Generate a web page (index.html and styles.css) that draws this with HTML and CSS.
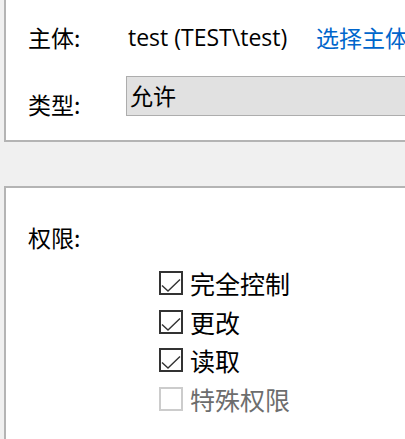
FILE: index.html
```html
<!DOCTYPE html>
<html lang="zh-CN">
<head>
<meta charset="utf-8">
<link rel="stylesheet" href="styles.css">
</head>
<body>
<div class="panel top">
  <div class="row r1">
    <span class="label">主体:</span>
    <span class="value">test (TEST\test)</span>
    <a class="link">选择主体</a>
  </div>
  <div class="row r2">
    <span class="label">类型:</span>
    <div class="combo">允许</div>
  </div>
</div>
<div class="panel bottom">
  <div class="label perm">权限:</div>
  <ul class="checks">
    <li class="check"><span class="box"><svg width="24" height="24" viewBox="0 0 24 24"><path d="M3 14.5 L9 20 L21 8.5" fill="none" stroke="#333" stroke-width="1.4"/></svg></span><span class="txt">完全控制</span></li>
    <li class="check"><span class="box"><svg width="24" height="24" viewBox="0 0 24 24"><path d="M3 14.5 L9 20 L21 8.5" fill="none" stroke="#333" stroke-width="1.4"/></svg></span><span class="txt">更改</span></li>
    <li class="check"><span class="box"><svg width="24" height="24" viewBox="0 0 24 24"><path d="M3 14.5 L9 20 L21 8.5" fill="none" stroke="#333" stroke-width="1.4"/></svg></span><span class="txt">读取</span></li>
    <li class="check disabled"><span class="box"></span><span class="txt">特殊权限</span></li>
  </ul>
</div>
</body>
</html>
```
FILE: styles.css
```css
html, body {
  margin: 0;
  padding: 0;
  background: #f0f0f0;
  overflow: hidden;
  width: 405px;
  height: 439px;
}
body {
  font-family: "Noto Sans", "Noto Sans CJK SC", sans-serif;
  color: #000;
}
.panel {
  margin-left: 4px;
  background: #fff;
  border-left: 2px solid #b4b4b4;
  box-sizing: border-box;
  overflow: hidden;
}
.panel.top {
  height: 142px;
  border-bottom: 2px solid #b4b4b4;
  padding: 22px 0 0 22px;
}
.panel.bottom {
  margin-top: 44px;
  height: 253px;
  border-top: 2px solid #b4b4b4;
  padding: 34px 0 0 22px;
}
.row {
  display: flex;
  align-items: center;
  white-space: nowrap;
}
.row > * { flex: none; }
.label {
  font-family: "Noto Sans CJK SC", sans-serif;
  font-size: 23px;
  line-height: 30px;
}
.r1 .label { width: 100px; }
.value {
  font-family: "Open Sans", "Noto Sans", sans-serif;
  font-size: 23px;
  line-height: 30px;
  width: 188px;
}
.link {
  font-family: "Noto Sans CJK SC", sans-serif;
  font-size: 23px;
  line-height: 30px;
  color: #0066cc;
}
.r2 {
  margin-top: 24px;
  align-items: flex-start;
}
.r2 .label {
  width: 98px;
  margin-top: 13px;
}
.combo {
  width: 300px;
  height: 40px;
  box-sizing: border-box;
  background: #e1e1e1;
  border: 1px solid #adadad;
  font-family: "Noto Sans CJK SC", sans-serif;
  font-size: 23px;
  line-height: 36px;
  padding-left: 3px;
}
.checks {
  list-style: none;
  margin: 12px 0 0 0;
  padding: 0 0 0 131px;
}
.check {
  display: flex;
  align-items: center;
  height: 38.6px;
}
.box {
  flex: none;
  width: 24px;
  height: 24px;
  box-sizing: border-box;
  border: 2px solid #333;
  margin-right: 7px;
  position: relative;
}
.box svg {
  position: absolute;
  left: -2px;
  top: -2px;
}
.txt {
  font-family: "Noto Sans CJK SC", sans-serif;
  font-size: 25px;
  line-height: 30px;
}
.disabled .box { border-color: #cccccc; }
.disabled .txt { color: #6d6d6d; }
```
